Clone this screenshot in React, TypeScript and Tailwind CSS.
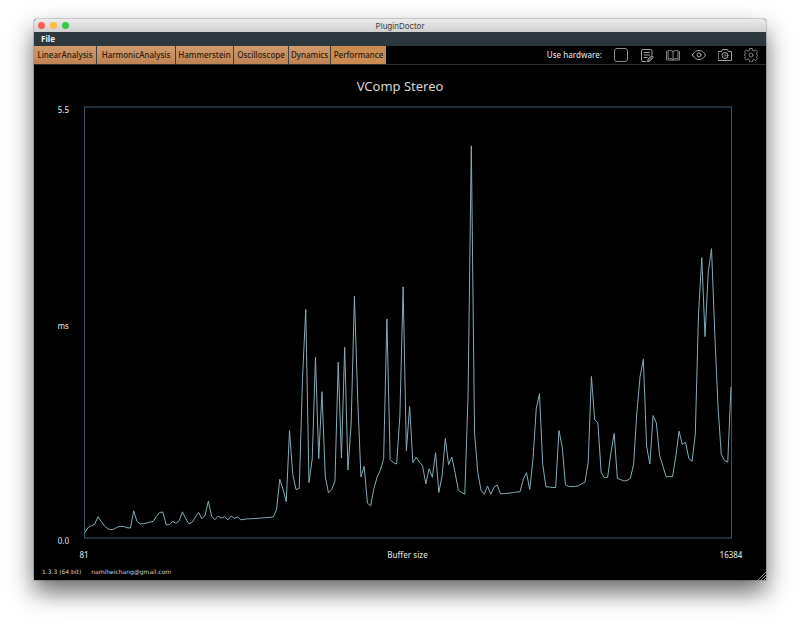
import React from 'react'

interface TabProps {
    label: string;
    width: string;
    active?: boolean;
}

const tabs: TabProps[] = [
    { label: 'LinearAnalysis', width: 'w-[62px]' },
    { label: 'HarmonicAnalysis', width: 'w-[78px]' },
    { label: 'Hammerstein', width: 'w-[57px]' },
    { label: 'Oscilloscope', width: 'w-[54px]' },
    { label: 'Dynamics', width: 'w-[41px]' },
    { label: 'Performance', width: 'w-[55px]', active: true },
];

// Height of each sample above the baseline, out of 431 (= 5.5 ms)
const samples = [
    4.7, 9.7, 11.3, 13, 20.3, 15.7, 11, 8.3, 7.3, 8,
    10, 10.7, 10.5, 9.3, 9, 26.3, 15.7, 13.3, 13.3, 14,
    15, 15.7, 20.7, 24.7, 25, 12.3, 12.3, 15.7, 13.7, 16.3,
    25.3, 18.7, 13.3, 14.7, 20, 24.7, 18.3, 22, 36, 21,
    17.3, 21, 19, 20.3, 17.3, 21, 18.7, 20, 17.3, 17.7,
    18.3, 18.3, 18.5, 18.7, 19, 19.3, 19.5, 19.7, 20.3, 27.3,
    58, 48, 35.3, 107, 63, 47.7, 48.7, 159, 228.7, 54.7,
    78.7, 180.7, 78.7, 146, 61.3, 44.3, 47.7, 56.3, 175.7, 79.3,
    190.7, 67.3, 114.7, 242, 139.7, 60.3, 71, 34, 31.3, 48.7,
    60.3, 67.3, 78.7, 219, 78, 74.7, 73.3, 121.3, 251.3, 86.3,
    131.3, 74.7, 80.3, 75.7, 71.3, 53.3, 68.7, 60, 84.7, 44.7,
    61.3, 99, 72.7, 80.3, 64.7, 47, 44.7, 43, 141, 393,
    104.7, 64.7, 47, 43, 51.3, 43, 50, 52.3, 43.3, 43.5,
    43.7, 44.3, 44.7, 45.3, 45.3, 57.7, 64.7, 47.7, 78, 128.7,
    144, 73, 50.3, 50.3, 49.7, 49.7, 107, 90.7, 52.3, 50.7,
    50.7, 51, 51.3, 53.7, 54.7, 74.7, 161.3, 117.7, 114.7, 64.7,
    59.7, 60, 84.3, 104, 58.7, 57.7, 56.3, 56.7, 59, 73,
    124.7, 161.3, 178.7, 91.3, 73.3, 122, 114.7, 82, 71.3, 60.7,
    60.7, 60.7, 81.3, 106.3, 93, 95.3, 79, 76, 103, 224.7,
    280.7, 201.3, 266.3, 289.7, 204.7, 131.3, 83, 76.7, 75.3, 150.7,
];

const points = samples.map((h, i) => `${i},${431 - h}`).join(' ');

const IconButton: React.FC<{ label: string; color: string; children: React.ReactNode }> = ({ label, color, children }) => (
    <button type="button" aria-label={label} className={`h-[14px] w-[14px] ${color}`}>
        <svg viewBox="0 0 28 28" className="h-full w-full" fill="none" stroke="currentColor" strokeWidth="2" strokeLinecap="round" strokeLinejoin="round">
            {children}
        </svg>
    </button>
);

const Toolbar: React.FC = () => (
    <div className="ml-auto flex items-center gap-3 pr-2">
        <label htmlFor="hardware" className="pb-px text-[8px] leading-[14px] font-medium text-[#dcdcdc]">Use hardware:</label>
        <input
            id="hardware"
            type="checkbox"
            className="h-[14px] w-[14px] appearance-none rounded-[3px] border border-[#8c8c8c] bg-black checked:bg-[#8c8c8c]"
        />
        <IconButton label="Notes" color="text-[#a2a2a2]">
            <path d="M12 27H6a3 3 0 0 1-3-3V6a3 3 0 0 1 3-3h15a3 3 0 0 1 3 3v7" />
            <path d="M8 9h11M8 14h11M8 19h6" />
            <path d="M15 27l1.500-5 7-7 3.500 3.500-7 7z" fill="currentColor" fillOpacity="0.5" />
        </IconButton>
        <IconButton label="Manual" color="text-[#858585]">
            <path d="M14 7c-2-2-6-2-10-2v16c4 0 8 0 10 2 2-2 6-2 10-2V5c-4 0-8 0-10 2zM14 7v16" />
            <path d="M1 7v17h11l2 1 2-1h11V7" />
        </IconButton>
        <IconButton label="View" color="text-[#a8a8a8]">
            <path d="M1 14C5 7 9 5 14 5s9 2 13 9c-4 7-8 9-13 9S5 21 1 14z" />
            <circle cx="14" cy="14" r="4" />
        </IconButton>
        <IconButton label="Screenshot" color="text-[#a2a2a2]">
            <path d="M1 7h6l2.500-4h9L21 7h6v18H1z" />
            <circle cx="14" cy="15" r="6" />
            <circle cx="14" cy="15" r="2" strokeOpacity="0.5" />
        </IconButton>
        <IconButton label="Settings" color="text-[#7c7c7c]">
            <path d="M11.500 1h5l1 4 2.500 1 3.500-2 3.500 3.500-2 3.500 1 2.500 1 0v2l-1 0-1 2.500 2 3.500-3.500 3.500-3.500-2-2.500 1-1 4h-5l-1-4L8 22l-3.500 2L1 20.500 3 17l-1-2.500-1 0v-2l1 0L3 10 1 7.500 4.500 4 8 6l2.500-1z" />
            <circle cx="14" cy="14" r="4" />
        </IconButton>
    </div>
);

const Chart: React.FC = () => (
    <main className="flex min-h-0 flex-1 flex-col text-[#d4d4d4]">
        <h1 className="pt-[11px] pb-[10px] text-center text-[13px] leading-5">VComp Stereo</h1>

        <div className="flex min-h-0 flex-1 pr-[34px]">
            {/* Y AXIS */}
            <div className="-mt-px -mb-[7px] flex w-[50px] flex-col justify-between pr-[15px] text-right text-[8px] leading-[10px] font-medium">
                <span>5.5</span>
                <span>ms</span>
                <span>0.0</span>
            </div>

            {/* PLOT */}
            <div className="flex min-w-0 flex-1 border-x border-y-2 border-x-[#38535f] border-y-[#1d2d38]">
                <svg viewBox="0 0 199 431" preserveAspectRatio="none" className="h-full w-full overflow-visible" role="img" aria-label="Processing time by buffer size">
                    <polyline points={points} fill="none" stroke="#86abb7" strokeWidth="1" vectorEffect="non-scaling-stroke" />
                </svg>
            </div>
        </div>

        {/* X AXIS */}
        <div className="mr-[35px] ml-[50px] flex justify-between pt-[10px] text-[8px] leading-[12px] font-medium whitespace-nowrap">
            <span className="flex w-0 justify-center">81</span>
            <span className="flex w-0 justify-center">Buffer size</span>
            <span className="flex w-0 justify-center">16384</span>
        </div>
    </main>
);

export default function App() {
    return (
        <div className="flex h-screen min-h-[360px] flex-col bg-white px-[34px] pt-[19px] pb-[49px] font-['Noto_Sans',sans-serif]">
            <div className="relative flex min-h-0 flex-1 flex-col rounded-t-[3px] bg-black shadow-[0_0_0_1px_rgba(0,0,0,0.15),0_12px_24px_rgba(0,0,0,0.6)]">
                {/* TITLE BAR */}
                <header className="relative flex h-[13px] items-center justify-center rounded-t-[3px] bg-linear-to-b from-[#ebebeb] to-[#cfcfcf]">
                    <div className="absolute left-1 flex gap-[5px]">
                        <button type="button" aria-label="Close" className="h-[7px] w-[7px] rounded-full bg-[#fc5b57]" />
                        <button type="button" aria-label="Minimize" className="h-[7px] w-[7px] rounded-full bg-[#fdbb40]" />
                        <button type="button" aria-label="Zoom" className="h-[7px] w-[7px] rounded-full bg-[#34c84a]" />
                    </div>
                    <span className="font-['Inter',sans-serif] text-[8px] leading-[14px] text-[#404040]">PluginDoctor</span>
                </header>

                {/* MENU BAR */}
                <nav className="flex h-[14px] items-center bg-[#2c383d] px-[7px]">
                    <button type="button" className="text-[8px] leading-[14px] font-bold text-[#f0f0f0]">File</button>
                </nav>

                {/* TABS */}
                <div className="flex h-[19px] border-b border-[#2b2b2b]">
                    <div role="tablist" className="flex gap-px bg-[#40413c]">
                        {tabs.map((tab) => (
                            <button
                                key={tab.label}
                                type="button"
                                role="tab"
                                aria-selected={!!tab.active}
                                className={`text-center text-[8px] leading-[18px] font-medium whitespace-nowrap text-[#2c1c10] ${tab.width} ${tab.active ? 'bg-[#ca8b52]' : 'bg-linear-to-b from-[#d19b6c] to-[#bd8254]'}`}
                            >
                                {tab.label}
                            </button>
                        ))}
                    </div>
                    <Toolbar />
                </div>

                <Chart />

                <footer className="flex gap-[10px] px-2 pt-[6px] pb-[3px] font-['DejaVu_Sans',sans-serif] text-[6px] leading-[10px] text-[#d0d0d0]">
                    <span>1.3.3 (64 bit)</span>
                    <span>namiheichang@gmail.com</span>
                </footer>

                {/* RESIZE GRIP */}
                <svg viewBox="0 0 8 8" className="absolute right-0 bottom-0 h-2 w-2" stroke="#9a9a9a" strokeWidth="1">
                    <path d="M0 8L8 0M3 8L8 3M6 8L8 6" />
                </svg>
            </div>
        </div>
    );
}
